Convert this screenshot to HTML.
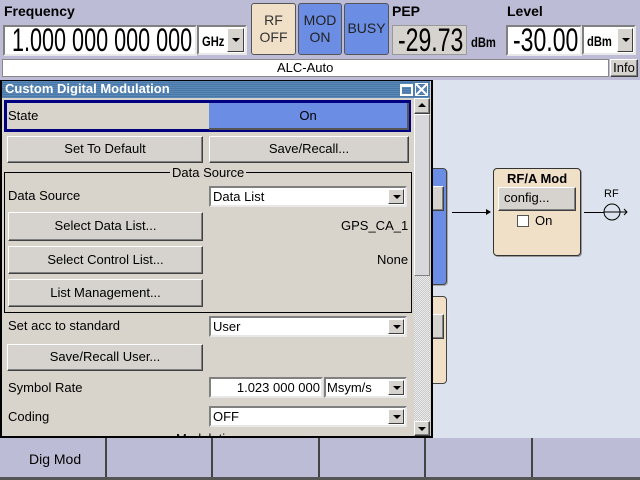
<!DOCTYPE html>
<html><head><style>
*{box-sizing:border-box;margin:0;padding:0}
body{width:640px;height:480px;position:relative;overflow:hidden;background:#dde3ee;font-family:"Liberation Sans",sans-serif;font-size:13px;color:#000}
.a{position:absolute}
.lbl{font-weight:bold;font-size:14px}
.fld{background:#fff;border:2px solid;border-color:#808080 #e8e8e8 #e8e8e8 #808080}
.btn{background:#d6d3ce;border:1px solid;border-color:#fff #404040 #404040 #fff;box-shadow:inset -1px -1px 0 #808080;text-align:center}
.dd{position:absolute;right:1px;top:1px;bottom:1px;width:16px;background:#d6d3ce;border:1px solid;border-color:#fff #404040 #404040 #fff}
.dd:after{content:"";position:absolute;left:4px;top:50%;margin-top:-2px;border:4px solid transparent;border-top:4px solid #000;border-bottom:0}
.t{position:absolute;white-space:nowrap}
.n{position:absolute;white-space:nowrap;font-size:32px;transform-origin:0 0}
.nb{position:absolute;white-space:nowrap;font-weight:bold;font-size:14px;transform:scaleX(0.8);transform-origin:0 0}
</style></head><body>
<div class="a" style="left:0;top:0;width:640px;height:80px;background:#bcbcd6"></div>
<div class="t lbl" style="left:4px;top:3px">Frequency</div>
<div class="a fld" style="left:3px;top:25px;width:194px;height:31px"></div>
<div class="n" style="left:12px;top:22px;transform:scaleX(0.675)">1.000 000 000 000</div>
<div class="a fld" style="left:197px;top:25px;width:50px;height:30px"><span class="nb" style="left:3px;top:6px">GHz</span><div class="dd" style="width:17px"></div></div>
<div class="a" style="left:251px;top:3px;width:45px;height:52px;background:#f0e0c8;border:1px solid #555;border-radius:3px;text-align:center;font-size:14px;line-height:17px;padding-top:8px;color:#333">RF<br>OFF</div>
<div class="a" style="left:298px;top:3px;width:44px;height:52px;background:#6b8de3;border:1px solid #555;border-radius:3px;text-align:center;font-size:14px;line-height:17px;padding-top:8px;color:#222">MOD<br>ON</div>
<div class="a" style="left:344px;top:3px;width:45px;height:52px;background:#6b8de3;border:1px solid #555;border-radius:3px;text-align:center;font-size:14px;line-height:17px;padding-top:16px;color:#222">BUSY</div>
<div class="t lbl" style="left:392px;top:3px">PEP</div>
<div class="a" style="left:392px;top:25px;width:75px;height:30px;background:#d6d3ce;border:1px solid #999"></div>
<div class="n" style="left:398px;top:22px;transform:scaleX(0.72)">-29.73</div>
<div class="nb" style="left:471px;top:34px">dBm</div>
<div class="t lbl" style="left:507px;top:3px">Level</div>
<div class="a fld" style="left:506px;top:25px;width:76px;height:31px"></div>
<div class="n" style="left:513px;top:22px;transform:scaleX(0.72)">-30.00</div>
<div class="a fld" style="left:582px;top:25px;width:54px;height:30px"><span class="nb" style="left:3px;top:6px">dBm</span><div class="dd"></div></div>
<div class="a" style="left:2px;top:59px;width:607px;height:18px;background:#fff;border:1px solid #888"></div>
<div class="t" style="left:277px;top:60px">ALC-Auto</div>
<div class="a btn" style="left:610px;top:59px;width:28px;height:18px;font-size:13px;line-height:15px">Info</div>

<!-- right diagram -->
<div class="a" style="left:420px;top:168px;width:27px;height:117px;background:#6b8de3;border:1px solid #444;border-radius:4px;box-shadow:1px 1px 0 #aaa"></div>
<div class="a btn" style="left:425px;top:186px;width:19px;height:25px"></div>
<div class="a" style="left:420px;top:296px;width:27px;height:88px;background:#f0e0c8;border:1px solid #444;border-radius:4px"></div>
<div class="a btn" style="left:425px;top:314px;width:19px;height:25px"></div>
<div class="a" style="left:452px;top:212px;width:36px;height:1px;background:#000"></div>
<div class="a" style="left:486px;top:209px;border:3px solid transparent;border-left:5px solid #000"></div>
<div class="a" style="left:493px;top:168px;width:88px;height:88px;background:#f0e0c8;border:1px solid #333;border-radius:4px;box-shadow:1px 1px 0 #999"></div>
<div class="t" style="left:507px;top:171px;font-weight:bold;font-size:13px">RF/A Mod</div>
<div class="a btn" style="left:498px;top:187px;width:78px;height:24px;text-align:left;padding-left:5px;line-height:20px;font-size:13px">config...</div>
<div class="a" style="left:517px;top:215px;width:12px;height:12px;background:#fff;border:1px solid #555"></div>
<div class="t" style="left:535px;top:213px;font-size:13px">On</div>
<div class="a" style="left:584px;top:212px;width:20px;height:1px;background:#000"></div>
<svg class="a" style="left:600px;top:200px" width="30" height="25"><circle cx="12" cy="12" r="8" fill="none" stroke="#000"/><line x1="4" y1="12" x2="27" y2="12" stroke="#000"/><polyline points="24,9 27,12 24,15" fill="none" stroke="#000"/></svg>
<div class="t" style="left:604px;top:188px;font-size:11px">RF</div>

<!-- dialog -->
<div class="a" style="left:0;top:80px;width:433px;height:358px;background:#d8d4cc;border:2px solid #000;border-top:1px solid #000"></div>
<div class="a" style="left:2px;top:81px;width:428px;height:17px;background:repeating-linear-gradient(#5a88b8 0 1px,#4a78a6 1px 2px)"></div>
<div class="t" style="left:5px;top:81px;font-weight:bold;font-size:13px;color:#fff">Custom Digital Modulation</div>
<div class="a" style="left:400px;top:84px;width:13px;height:12px;border:2px solid #fff;border-top-width:3px"></div>
<svg class="a" style="left:415px;top:83px" width="13" height="13"><path d="M1 1L12 12M12 1L1 12" stroke="#fff" stroke-width="2"/><rect x="0.5" y="0.5" width="12" height="12" fill="none" stroke="#fff"/></svg>
<!-- scrollbar -->
<div class="a" style="left:414px;top:98px;width:16px;height:338px;background:repeating-conic-gradient(#c8c8c8 0 25%,#ececec 0 50%) 0 0/2px 2px"></div>
<div class="a btn" style="left:414px;top:98px;width:16px;height:16px"></div>
<div class="a" style="left:418px;top:103px;border:4px solid transparent;border-bottom:4px solid #000;border-top:0"></div>
<div class="a" style="left:414px;top:114px;width:16px;height:162px;background:#d8d8dc;border:1px solid;border-color:#fff #808080 #808080 #fff"></div>
<div class="a btn" style="left:414px;top:421px;width:16px;height:15px"></div>
<div class="a" style="left:418px;top:427px;border:4px solid transparent;border-top:4px solid #000;border-bottom:0"></div>

<div class="a" style="left:4px;top:100px;width:407px;height:32px;border:3px solid #000080"></div>
<div class="t" style="left:8px;top:108px">State</div>
<div class="a" style="left:209px;top:103px;width:200px;height:27px;background:#6b8de3;border-right:2px solid #555;border-bottom:2px solid #555;text-align:center;line-height:25px">On</div>
<div class="a btn" style="left:7px;top:136px;width:196px;height:27px;line-height:24px">Set To Default</div>
<div class="a btn" style="left:209px;top:136px;width:200px;height:27px;line-height:24px">Save/Recall...</div>
<div class="a" style="left:4px;top:172px;width:408px;height:141px;border:1px solid #000"></div>
<div class="t" style="left:170px;top:165px;background:#d8d4cc;padding:0 2px">Data Source</div>
<div class="t" style="left:8px;top:188px">Data Source</div>
<div class="a fld" style="left:209px;top:186px;width:198px;height:21px"><span class="t" style="left:2px;top:1px">Data List</span><div class="dd"></div></div>
<div class="a btn" style="left:8px;top:212px;width:195px;height:29px;line-height:26px">Select Data List...</div>
<div class="t" style="left:341px;top:218px">GPS_CA_1</div>
<div class="a btn" style="left:8px;top:246px;width:195px;height:28px;line-height:25px">Select Control List...</div>
<div class="t" style="left:377px;top:252px">None</div>
<div class="a btn" style="left:8px;top:279px;width:195px;height:28px;line-height:25px">List Management...</div>
<div class="t" style="left:8px;top:318px">Set acc to standard</div>
<div class="a fld" style="left:209px;top:316px;width:198px;height:21px"><span class="t" style="left:2px;top:1px">User</span><div class="dd"></div></div>
<div class="a btn" style="left:7px;top:344px;width:196px;height:27px;line-height:24px">Save/Recall User...</div>
<div class="t" style="left:8px;top:380px">Symbol Rate</div>
<div class="a fld" style="left:209px;top:377px;width:114px;height:21px"><span class="t" style="right:1px;top:1px">1.023 000 000</span></div>
<div class="a fld" style="left:324px;top:377px;width:83px;height:21px"><span class="t" style="left:1px;top:1px">Msym/s</span><div class="dd"></div></div>
<div class="t" style="left:8px;top:409px">Coding</div>
<div class="a fld" style="left:209px;top:406px;width:198px;height:21px"><span class="t" style="left:2px;top:1px">OFF</span><div class="dd"></div></div>
<div class="a" style="left:2px;top:432px;width:411px;height:4px;overflow:hidden"><span class="t" style="left:174px;top:-1px">Modulation</span></div>

<!-- footer -->
<div class="a" style="left:0;top:438px;width:640px;height:42px;background:#bcbcd6"></div>
<div class="a" style="left:105px;top:438px;width:2px;height:42px;background:#444"></div>
<div class="a" style="left:211px;top:438px;width:2px;height:42px;background:#444"></div>
<div class="a" style="left:318px;top:438px;width:2px;height:42px;background:#444"></div>
<div class="a" style="left:424px;top:438px;width:2px;height:42px;background:#444"></div>
<div class="a" style="left:531px;top:438px;width:2px;height:42px;background:#444"></div>
<div class="a" style="left:0;top:477px;width:640px;height:3px;background:#555"></div>
<div class="t" style="left:29px;top:451px;font-size:14px">Dig Mod</div>
</body></html>
